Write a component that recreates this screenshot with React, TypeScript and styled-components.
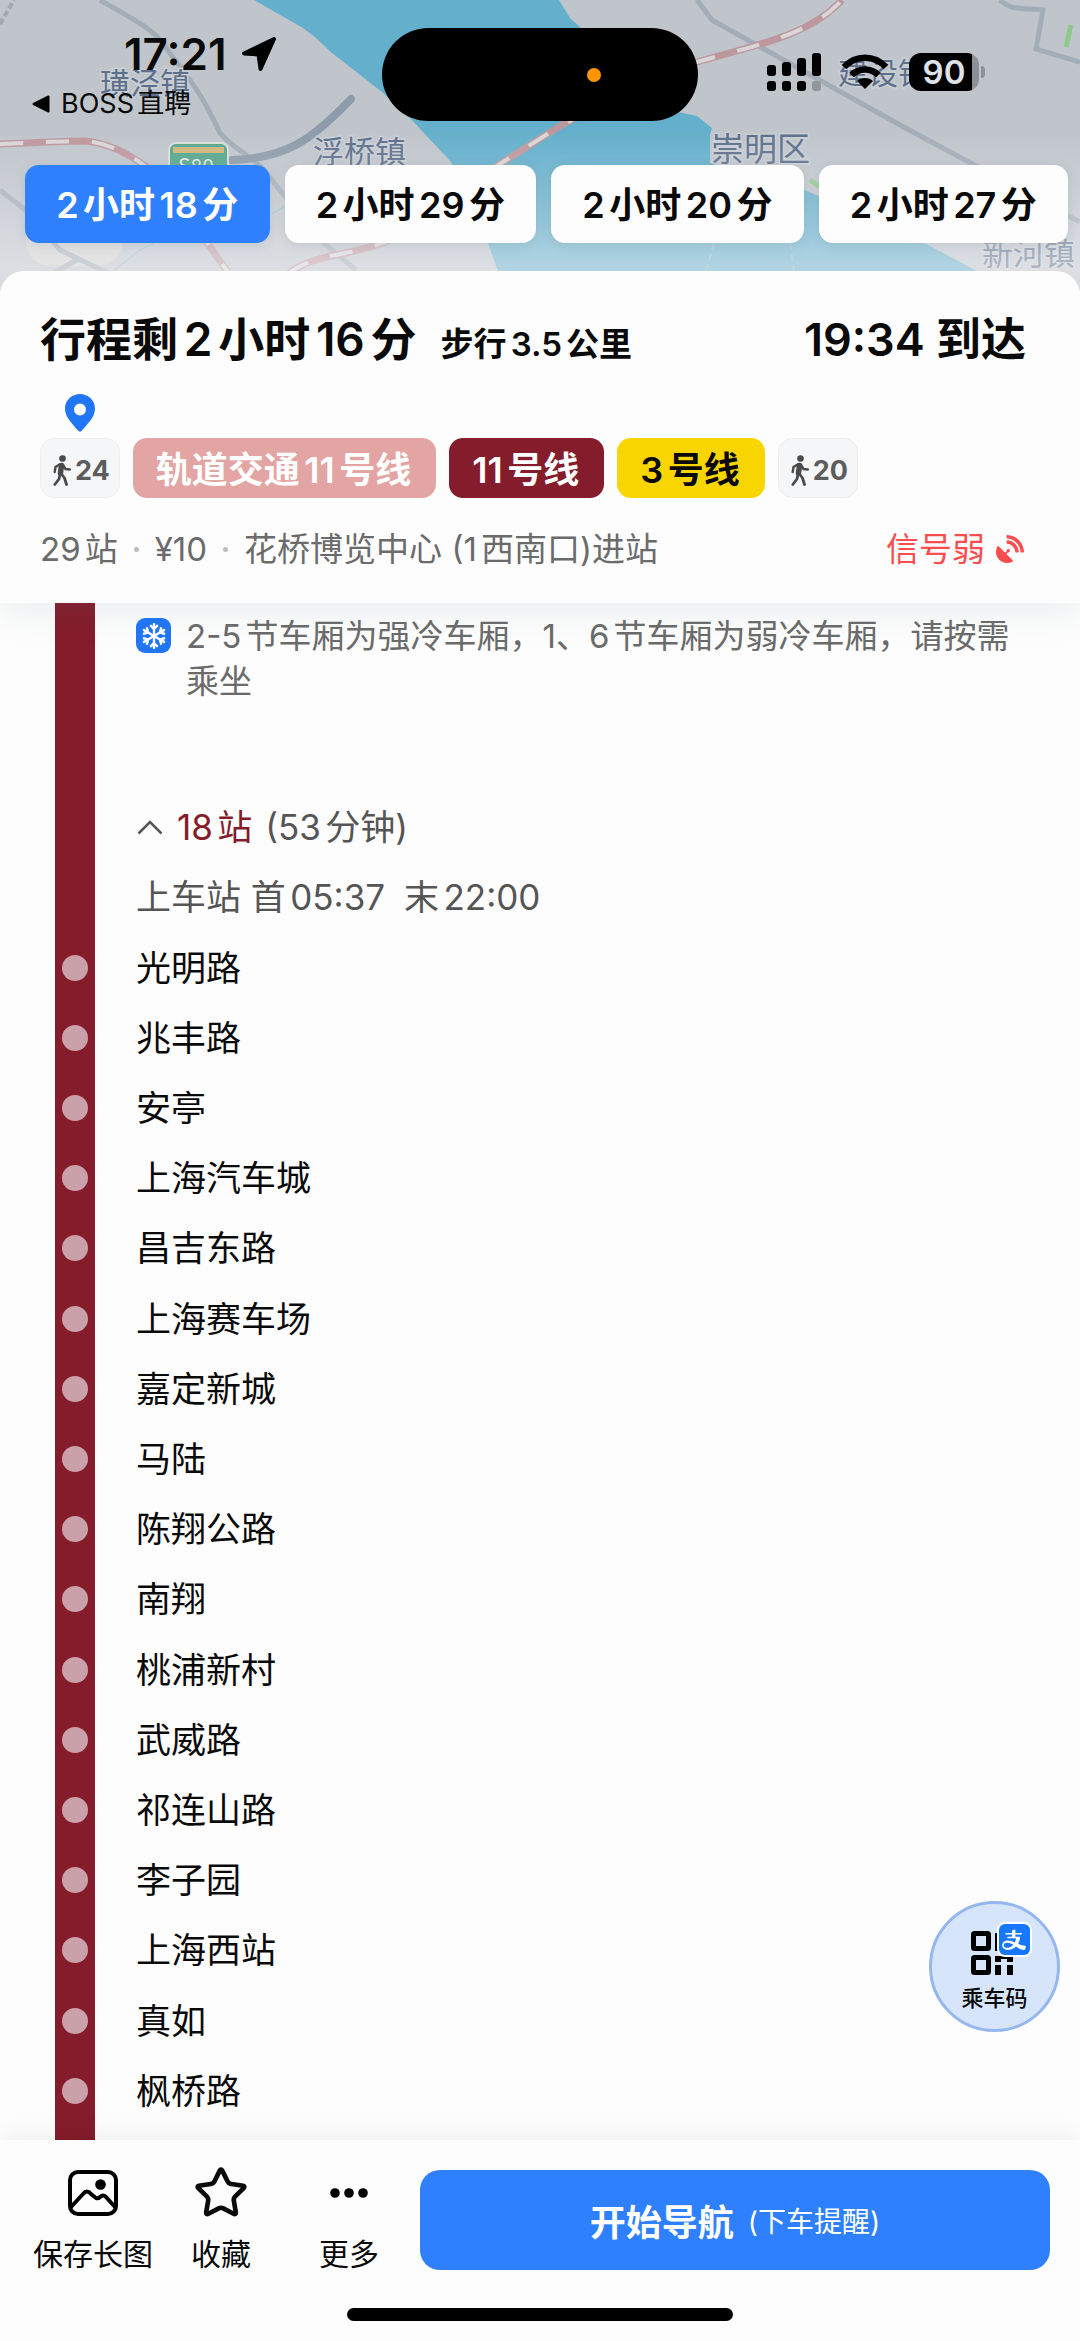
import React from "react";
import styled, { createGlobalStyle, css } from "styled-components";
import { Star } from "lucide-react";
import { FaRegSnowflake, FaSatelliteDish } from "react-icons/fa";
import { AiFillAlipaySquare } from "react-icons/ai";

const color = {
  page: "#fdfdfd",
  ink: "#0a0a0a",
  text: "#555555",
  muted: "#6b6b6b",
  blue: "#2f80ff",
  pinBlue: "#2176f6",
  metro: "#841c2b",
  metroFaded: "#e3a5a3",
  metroDot: "#cba1a9",
  yellow: "#f9d500",
  alert: "#fb4d50",
};

const GlobalStyle = createGlobalStyle`
  * { box-sizing: border-box; }
  body {
    margin: 0;
    background: ${color.page};
    color: ${color.ink};
    font-family: Inter, "Noto Sans CJK SC", sans-serif;
    text-autospace: normal;
  }
  button { font: inherit; color: inherit; border: 0; padding: 0; background: none; cursor: pointer; }
  a { color: inherit; text-decoration: none; }
  ul, p, h1 { margin: 0; padding: 0; list-style: none; font-weight: inherit; }
  svg { display: block; flex: none; }
`;

const Page = styled.div`
  min-height: 100vh;
  display: flex;
  flex-direction: column;
`;

/* ---------- map and status bar ---------- */

const MapHeader = styled.header`
  position: relative;
  padding: 28px 0 48px;
  margin-bottom: -20px;
  overflow: hidden;
  background: #c0c5cc;
`;

const MapCanvas = styled.svg`
  position: absolute;
  inset: 0;
  width: 100%;
  height: 100%;
`;

const MapLabel = styled.text`
  font-family: "Noto Sans CJK SC", sans-serif;
  fill: #5d6f8a;
  paint-order: stroke;
  stroke: #c9ced5;
  stroke-width: 3px;
`;

const StatusBar = styled.div`
  position: relative;
  display: grid;
  grid-template-columns: 1fr 316px 1fr;
  align-items: start;
`;

const StatusLeft = styled.div`
  display: flex;
  flex-direction: column;
  padding-left: 32px;
`;

const Clock = styled.div`
  display: flex;
  align-items: center;
  gap: 14px;
  padding-left: 92px;
  font-size: 44px;
  line-height: 52px;
  font-weight: 600;
`;

const BackLink = styled.a`
  display: flex;
  align-items: center;
  gap: 11px;
  font-size: 27px;
  line-height: 48px;
`;

const Island = styled.div`
  height: 93px;
  border-radius: 47px;
  background: #000;
  display: flex;
  align-items: center;
  justify-content: flex-end;
  padding-right: 97px;
`;

const PrivacyDot = styled.span`
  width: 14px;
  height: 14px;
  border-radius: 50%;
  background: #ff9500;
`;

const StatusRight = styled.div`
  display: flex;
  align-items: center;
  justify-content: flex-end;
  height: 88px;
  gap: 20px;
  padding-right: 95px;
`;

const Battery = styled.div`
  display: flex;
  align-items: center;
  gap: 2px;
`;

const BatteryBody = styled.div`
  width: 70px;
  height: 38px;
  border-radius: 12px;
  background: linear-gradient(90deg, #000 90%, #8d9094 90%);
  color: #dfe2e6;
  font-size: 33px;
  line-height: 38px;
  font-weight: 600;
  text-align: center;
`;

const BatteryTip = styled.span`
  width: 4px;
  height: 12px;
  border-radius: 0 4px 4px 0;
  background: #8d9094;
`;

const Plans = styled.nav`
  position: relative;
  display: flex;
  gap: 15px;
  margin-top: 37px;
  padding: 0 12px 0 25px;
`;

const PlanButton = styled.button<{ $active?: boolean }>`
  flex: 1 1 auto;
  height: 78px;
  padding-bottom: 4px;
  border-radius: 14px;
  background: ${(p) => (p.$active ? color.blue : "#fdfdfd")};
  color: ${(p) => (p.$active ? "#fff" : color.ink)};
  box-shadow: 0 2px 12px rgba(60, 80, 100, 0.12);
  font-size: 36px;
  font-weight: 600;
  white-space: nowrap;
`;

/* ---------- trip summary ---------- */

const Summary = styled.section`
  position: relative;
  z-index: 1;
  padding: 36px 54px 30px 40px;
  border-radius: 24px 24px 0 0;
  background: ${color.page};
  box-shadow: 0 12px 32px rgba(90, 120, 130, 0.1);
  clip-path: inset(0 0 -48px 0);
`;

const TitleRow = styled.div`
  display: flex;
  align-items: baseline;
  gap: 24px;
  line-height: 64px;
  font-weight: 600;
  white-space: nowrap;
`;

const Title = styled.h1`
  font-size: 46px;
`;

const WalkTotal = styled.span`
  font-size: 33px;
  line-height: 48px;
`;

const Arrival = styled.span`
  margin-left: auto;
  font-size: 45px;
`;

const PinRow = styled.div`
  margin: 22px 0 6px;
  padding-left: 25px;
`;

const Legs = styled.div`
  display: flex;
  gap: 13px;
`;

const pill = css`
  display: flex;
  align-items: center;
  height: 60px;
  border-radius: 14px;
  white-space: nowrap;
`;

const LineTag = styled.span<{ $bg: string; $fg?: string }>`
  ${pill}
  padding: 0 25px 3px 23px;
  background: ${(p) => p.$bg};
  color: ${(p) => p.$fg ?? "#fff"};
  font-size: 36px;
  font-weight: 600;
`;

const WalkTag = styled.span`
  ${pill}
  gap: 4px;
  padding: 5px 9px 0 12px;
  border: 1px solid #eceef0;
  background: #f4f6f8;
  color: #5c5c5c;
  font-size: 27px;
  font-weight: 700;
`;

const InfoRow = styled.div`
  display: flex;
  align-items: center;
  justify-content: space-between;
  margin-top: 27px;
  padding-right: 2px;
  font-size: 33px;
  line-height: 48px;
  color: ${color.muted};
`;

const Facts = styled.p`
  display: flex;
  align-items: center;
  gap: 16px;
`;

const Separator = styled.i`
  width: 5px;
  height: 5px;
  border-radius: 50%;
  background: #bdbdbd;
`;

const WeakSignal = styled.span`
  display: flex;
  align-items: center;
  gap: 11px;
  color: ${color.alert};
`;

/* ---------- stops ---------- */

const Itinerary = styled.main`
  flex: 1;
  display: flex;
  flex-direction: column;
`;

const StopList = styled.ul`
  flex: 1;
  display: flex;
  flex-direction: column;
`;

const rowBase = css`
  display: flex;
  gap: 41px;
  padding: 0 54px 0 55px;
`;

const TipRow = styled.div`
  ${rowBase}
  min-height: 189px;
`;

const StopRow = styled.li`
  ${rowBase}
  flex: 1;
  min-height: 64px;
  font-size: 35px;
  line-height: 54px;
`;

const TailRow = styled.div`
  ${rowBase}
  min-height: 14px;
`;

const Rail = styled.div`
  flex: none;
  width: 40px;
  background: ${color.metro};
  display: flex;
  align-items: center;
  justify-content: center;
`;

const RailDot = styled.span`
  width: 26px;
  height: 26px;
  border-radius: 50%;
  background: ${color.metroDot};
`;

const StopName = styled.span`
  align-self: center;
`;

const Tip = styled.div`
  flex: 1;
  display: flex;
  align-items: flex-start;
  gap: 15px;
  padding-top: 11px;
  font-size: 33px;
  line-height: 45px;
  color: ${color.muted};
`;

const SnowBadge = styled.span`
  flex: none;
  display: flex;
  align-items: center;
  justify-content: center;
  width: 35px;
  height: 35px;
  margin-top: 4px;
  border-radius: 9px;
  background: ${color.pinBlue};
  color: #fff;
`;

const ToggleStops = styled.button`
  display: flex;
  align-items: center;
  gap: 13px;
  color: ${color.text};
`;

const StopCount = styled.span`
  color: ${color.metro};
`;

const Hours = styled.span`
  align-self: center;
  display: flex;
  gap: 19px;
  color: ${color.text};
`;

/* ---------- floating ride code ---------- */

const RideCode = styled.button`
  position: fixed;
  right: 20px;
  bottom: 309px;
  z-index: 2;
  display: flex;
  flex-direction: column;
  align-items: center;
  gap: 6px;
  width: 131px;
  height: 131px;
  padding-top: 18px;
  border: 3px solid #93b7ee;
  border-radius: 50%;
  background: #d7e5fb;
  font-size: 22px;
  line-height: 32px;
  font-weight: 500;
`;

const CodeIcon = styled.span`
  position: relative;
  width: 74px;
  height: 54px;
  padding: 9px 0 0 13px;
`;

const AlipayBadge = styled.span`
  position: absolute;
  top: 0;
  right: 0;
  width: 35px;
  height: 35px;
  border: 2px solid #fff;
  border-radius: 8px;
  overflow: hidden;
  background: #fff;
  color: #1677ff;
  display: flex;
  align-items: center;
  justify-content: center;
`;

/* ---------- bottom bar ---------- */

const BottomBar = styled.footer`
  position: relative;
  z-index: 1;
  padding: 30px 30px 20px 29px;
  background: ${color.page};
  box-shadow: 0 -4px 24px rgba(0, 0, 0, 0.06);
`;

const Actions = styled.div`
  display: grid;
  grid-template-columns: 128px 128px 128px 1fr;
  align-items: start;
`;

const Action = styled.button`
  display: flex;
  flex-direction: column;
  align-items: center;
  gap: 18px;
  font-size: 30px;
  line-height: 40px;
  white-space: nowrap;
`;

const ActionIcon = styled.span`
  display: flex;
  align-items: center;
  justify-content: center;
  height: 46px;
`;

const StartButton = styled.button`
  display: flex;
  align-items: center;
  justify-content: center;
  gap: 14px;
  height: 100px;
  margin-left: 7px;
  border-radius: 20px;
  background: ${color.blue};
  color: #fff;
  font-size: 36px;
  font-weight: 600;
  white-space: nowrap;
`;

const StartNote = styled.span`
  font-size: 28px;
  font-weight: 400;
`;

const HomeIndicator = styled.div`
  width: 386px;
  height: 13px;
  margin: 34px auto 0;
  border-radius: 7px;
  background: #000;
`;

/* ---------- drawings ---------- */

const RAILWAYS = [
  "M0 144 C30 143 60 141 85 141 C110 143 130 155 148 168 C175 190 200 235 228 272",
  "M288 274 C315 252 350 258 395 238 L500 164 L560 126 L640 85 L697 62 C760 44 810 35 842 0",
];

const MAIN_ROADS = [
  "M100 0 C135 20 150 28 160 40 C190 80 200 90 220 133 C235 150 250 155 262 168 L320 240 L356 270",
  "M0 190 L28 212 L60 250 L110 274",
  "M52 274 L80 258",
  "M697 0 L712 20 L900 125 L1080 222",
  "M1000 0 C1010 10 1020 8 1043 10 L1036 49 L1080 62",
];

const MapBackdrop = () => (
  <MapCanvas viewBox="0 0 1080 291" preserveAspectRatio="xMidYMin slice" aria-hidden="true">
    <defs>
      <linearGradient id="haze" x1="0" y1="0" x2="0" y2="1">
        <stop offset="0.45" stopColor="#f4f4f6" stopOpacity="0" />
        <stop offset="0.94" stopColor="#f4f4f6" stopOpacity="0.55" />
      </linearGradient>
    </defs>
    <rect width="1080" height="291" fill="#c0c5cc" />
    <path
      d="M254 0 L303 28 L316 38 L332 53 L382 92 L410 118 L451 162 L485 235 L505 291 L1010 291 L975 270 L930 246 L805 190 L765 176 L710 163 L710 135 L712 128 L697 116 L678 112 L640 100 L600 60 L580 27 L570 18 L559 0 Z"
      fill="#64afcb"
    />
    <rect x="26" y="176" width="96" height="90" rx="24" fill="#d3d2d1" />
    <path d="M0 24 L14 0" stroke="#a5a8ac" strokeWidth="4" strokeDasharray="6 3" fill="none" />
    {MAIN_ROADS.map((d) => (
      <path key={d} d={d} fill="none" stroke="#a3adb8" strokeWidth="5" />
    ))}
    <path d="M232 160 C285 158 310 142 351 99" fill="none" stroke="#8d9baa" strokeWidth="8" strokeLinecap="round" />
    {RAILWAYS.map((d) => (
      <g key={d} fill="none">
        <path d={d} stroke="#bd979e" strokeWidth="7" />
        <path d={d} stroke="#d9d6d8" strokeWidth="4" strokeDasharray="23 23" />
      </g>
    ))}
    <path d="M112 272 L140 250 L165 238 M272 214 L288 204" stroke="#7fc0cc" strokeWidth="1" fill="none" />
    <path d="M706 271 L714 243 M790 243 L794 271" stroke="#8fb3c6" strokeWidth="2" strokeDasharray="7 4" />
    <path d="M1071 25 L1066 47 M810 180 L820 187" stroke="#8fc98c" strokeWidth="5" />
    <rect x="169" y="143" width="59" height="40" rx="7" fill="#55a58c" stroke="#d8dedb" strokeWidth="2" />
    <rect x="173" y="147" width="51" height="6" fill="#d0b577" />
    <MapLabel x="178" y="174" fontSize="21" style={{ fill: "#dfe8e4", stroke: "none" }}>S80</MapLabel>
    <MapLabel x="100" y="94" fontSize="30">璜泾镇</MapLabel>
    <MapLabel x="313" y="163" fontSize="31">浮桥镇</MapLabel>
    <MapLabel x="711" y="161" fontSize="33">崇明区</MapLabel>
    <MapLabel x="838" y="84" fontSize="30">建设镇</MapLabel>
    <MapLabel x="982" y="265" fontSize="31">新河镇</MapLabel>
    <rect width="1080" height="291" fill="url(#haze)" />
  </MapCanvas>
);

const LocationArrow = () => (
  <svg width="36" height="36" viewBox="0 0 36 36">
    <path d="M33 3 L3 17.500 L17.500 18.500 L19.500 33 Z" fill="#000" stroke="#000" strokeWidth="4" strokeLinejoin="round" />
  </svg>
);

const BackTriangle = () => (
  <svg width="18" height="18" viewBox="0 0 18 18">
    <path d="M1.500 9 L16.500 1.500 V16.500 Z" fill="#000" stroke="#000" strokeWidth="2" strokeLinejoin="round" />
  </svg>
);

const SIGNAL_TOPS = [12, 9, 5, 0];

const DualSignal = () => (
  <svg width="54" height="38" viewBox="0 0 54 38">
    {SIGNAL_TOPS.map((top, i) => (
      <g key={top}>
        <rect x={i * 15} y={top} width="9" height={23 - top} rx="3" />
        <rect x={i * 15} y="28" width="9" height="10" rx="3" fill={i === 3 ? "#93969a" : "#000"} />
      </g>
    ))}
  </svg>
);

const Wifi = () => (
  <svg width="48" height="36" viewBox="0 0 48 36">
    <g fill="none" stroke="#000" strokeWidth="6.500">
      <path d="M3 13 C15 0.500 33 0.500 45 13" />
      <path d="M10.500 21 C18 13.500 30 13.500 37.500 21" />
    </g>
    <path d="M24 35 L16 27 C20 23 28 23 32 27 Z" />
  </svg>
);

const Pin = () => (
  <svg width="30" height="38" viewBox="0 0 30 38">
    <path
      d="M15 0 C6.500 0 0 6.500 0 14.500 C0 23 6 28 13 36.500 C14.200 38 15.800 38 17 36.500 C24 28 30 23 30 14.500 C30 6.500 23.500 0 15 0 Z M15 9.500 A6 6 0 1 1 15 21.500 A6 6 0 1 1 15 9.500 Z"
      fill={color.pinBlue}
      fillRule="evenodd"
    />
  </svg>
);

const Walker = () => (
  <svg width="18" height="31" viewBox="0 0 18 31">
    <circle cx="9.500" cy="3.500" r="3.300" fill="#4a4a4a" />
    <g fill="none" stroke="#4a4a4a" strokeLinecap="round" strokeLinejoin="round">
      <path d="M8.500 10.500 L7.500 18" strokeWidth="5.500" />
      <path d="M6.500 9.500 L2.500 12 L1.700 17" strokeWidth="2.400" />
      <path d="M10 10 L12.500 14 L16.800 14.500" strokeWidth="2.400" />
      <path d="M7 19.500 L6 24 L1.800 29.500" strokeWidth="2.800" />
      <path d="M8.500 19 L11.500 23 L13.500 29.500" strokeWidth="2.800" />
    </g>
  </svg>
);

const ChevronUp = () => (
  <svg width="28" height="16" viewBox="0 0 28 16">
    <path d="M2.500 14.500 L14 3 L25.500 14.500" fill="none" stroke="#555" strokeWidth="2.500" />
  </svg>
);

const QrCode = () => (
  <svg width="44" height="44" viewBox="0 0 44 44">
    <g fill="none" stroke="#000" strokeWidth="5">
      <rect x="2.500" y="2.500" width="15" height="15" rx="1" />
      <rect x="2.500" y="26.500" width="15" height="15" rx="1" />
    </g>
    <path d="M24 2 H30 V20 H24 Z M24 25 H42 V31 H36 V28 H30 V31 H24 Z M24 34 H30 V44 H24 Z M36 34 H42 V44 H36 Z" />
  </svg>
);

const Picture = () => (
  <svg width="50" height="46" viewBox="0 0 50 46">
    <g fill="none" stroke="#000" strokeWidth="4" strokeLinejoin="round">
      <rect x="2" y="2" width="46" height="42" rx="8" />
      <path d="M3 37 L15 24 Q19 19 23 24 L28 28 Q30 29 32 27 Q35 24 38 27 L47 37" />
    </g>
    <circle cx="32.500" cy="14.500" r="5.300" />
  </svg>
);

const Dots = () => (
  <svg width="38" height="10" viewBox="0 0 38 10">
    <circle cx="5" cy="5" r="4.800" />
    <circle cx="19" cy="5" r="4.800" />
    <circle cx="33" cy="5" r="4.800" />
  </svg>
);

/* ---------- data ---------- */

const PLANS = ["2小时18分", "2小时29分", "2小时20分", "2小时27分"];

const STOPS = [
  "光明路", "兆丰路", "安亭", "上海汽车城", "昌吉东路", "上海赛车场", "嘉定新城", "马陆", "陈翔公路",
  "南翔", "桃浦新村", "武威路", "祁连山路", "李子园", "上海西站", "真如", "枫桥路",
];

export default function App() {
  return (
    <Page>
      <GlobalStyle />
      <MapHeader>
        <MapBackdrop />
        <StatusBar>
          <StatusLeft>
            <Clock>
              17:21
              <LocationArrow />
            </Clock>
            <BackLink href="#back">
              <BackTriangle />
              BOSS直聘
            </BackLink>
          </StatusLeft>
          <Island>
            <PrivacyDot />
          </Island>
          <StatusRight>
            <DualSignal />
            <Wifi />
            <Battery>
              <BatteryBody>90</BatteryBody>
              <BatteryTip />
            </Battery>
          </StatusRight>
        </StatusBar>
        <Plans>
          {PLANS.map((plan, i) => (
            <PlanButton key={plan} type="button" $active={i === 0}>
              {plan}
            </PlanButton>
          ))}
        </Plans>
      </MapHeader>

      <Summary>
        <TitleRow>
          <Title>行程剩2小时16分</Title>
          <WalkTotal>步行3.5公里</WalkTotal>
          <Arrival>19:34 到达</Arrival>
        </TitleRow>
        <PinRow>
          <Pin />
        </PinRow>
        <Legs>
          <WalkTag>
            <Walker />
            24
          </WalkTag>
          <LineTag $bg={color.metroFaded}>轨道交通11号线</LineTag>
          <LineTag $bg={color.metro}>11号线</LineTag>
          <LineTag $bg={color.yellow} $fg={color.ink}>3号线</LineTag>
          <WalkTag>
            <Walker />
            20
          </WalkTag>
        </Legs>
        <InfoRow>
          <Facts>
            <span>29站</span>
            <Separator />
            <span>¥10</span>
            <Separator />
            <span>花桥博览中心 (1西南口)进站</span>
          </Facts>
          <WeakSignal>
            信号弱
            <FaSatelliteDish size={28} />
          </WeakSignal>
        </InfoRow>
      </Summary>

      <Itinerary>
        <TipRow>
          <Rail />
          <Tip>
            <SnowBadge>
              <FaRegSnowflake size={26} />
            </SnowBadge>
            <p>2-5节车厢为强冷车厢，1、6节车厢为弱冷车厢，请按需乘坐</p>
          </Tip>
        </TipRow>
        <StopList>
          <StopRow>
            <Rail />
            <ToggleStops type="button" aria-expanded="true">
              <ChevronUp />
              <StopCount>18站</StopCount>
              <span>(53分钟)</span>
            </ToggleStops>
          </StopRow>
          <StopRow>
            <Rail />
            <Hours>
              <span>上车站 首05:37</span>
              <span>末22:00</span>
            </Hours>
          </StopRow>
          {STOPS.map((stop) => (
            <StopRow key={stop}>
              <Rail>
                <RailDot />
              </Rail>
              <StopName>{stop}</StopName>
            </StopRow>
          ))}
        </StopList>
        <TailRow>
          <Rail />
        </TailRow>
      </Itinerary>

      <RideCode type="button">
        <CodeIcon>
          <QrCode />
          <AlipayBadge>
            <AiFillAlipaySquare size={42} />
          </AlipayBadge>
        </CodeIcon>
        乘车码
      </RideCode>

      <BottomBar>
        <Actions>
          <Action type="button">
            <ActionIcon>
              <Picture />
            </ActionIcon>
            保存长图
          </Action>
          <Action type="button">
            <ActionIcon>
              <Star size={56} strokeWidth={2} />
            </ActionIcon>
            收藏
          </Action>
          <Action type="button">
            <ActionIcon>
              <Dots />
            </ActionIcon>
            更多
          </Action>
          <StartButton type="button">
            开始导航
            <StartNote>(下车提醒)</StartNote>
          </StartButton>
        </Actions>
        <HomeIndicator />
      </BottomBar>
    </Page>
  );
}
